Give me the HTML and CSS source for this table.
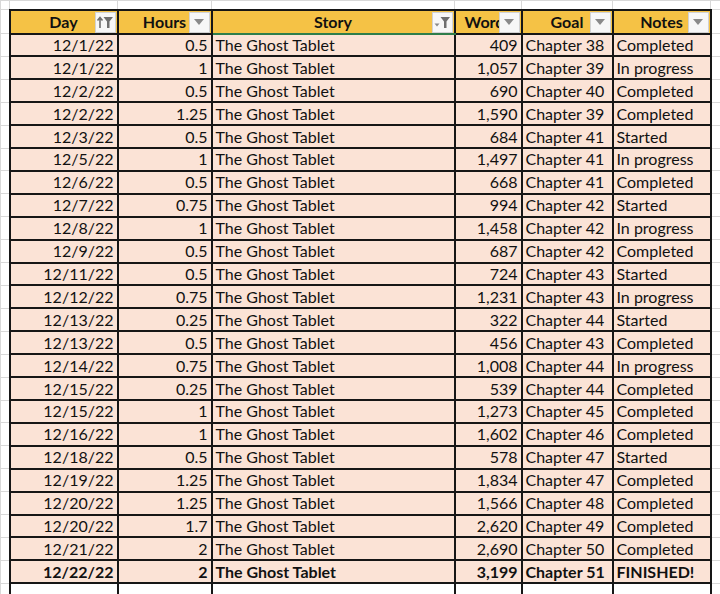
FILE: index.html
```html
<!DOCTYPE html>
<html lang="en">
<head>
<meta charset="utf-8">
<title>Writing log</title>
<link rel="stylesheet" href="styles.css">
</head>
<body>
<table class="sheet">
  <colgroup>
    <col class="c-gut"><col class="c-day"><col class="c-hours"><col class="c-story"><col class="c-words"><col class="c-goal"><col class="c-notes"><col class="c-rest">
  </colgroup>
  <tr class="top"><td class="g"></td><td class="g"></td><td class="g"></td><td class="g"></td><td class="g"></td><td class="g"></td><td class="g"></td><td class="g"></td></tr>
  <tr class="head">
    <td class="g"></td>
    <th>Day<span class="btn"><svg width="18" height="14" viewBox="0 0 18 14"><path d="M4 13V3M1.5 5.5L4 2.5L6.5 5.5" fill="none" stroke="#6f6f6f" stroke-width="1.6"/><path d="M7.5 2H17L13.5 6.5V13H11V6.5Z" fill="#6f6f6f"/></svg></span></th>
    <th>Hours<span class="btn"><svg width="12" height="8" viewBox="0 0 12 8"><path d="M1 1H11L6 7Z" fill="#8a8a8a"/></svg></span></th>
    <th class="story">Story<span class="btn"><svg width="18" height="14" viewBox="0 0 18 14"><path d="M1.5 8.5H6.5L4 11.5Z" fill="#8a8a8a"/><path d="M7.5 2H17L13.5 6.5V13H11V6.5Z" fill="#6f6f6f"/></svg></span></th>
    <th>Words<span class="btn"><svg width="12" height="8" viewBox="0 0 12 8"><path d="M1 1H11L6 7Z" fill="#8a8a8a"/></svg></span></th>
    <th>Goal<span class="btn"><svg width="12" height="8" viewBox="0 0 12 8"><path d="M1 1H11L6 7Z" fill="#8a8a8a"/></svg></span></th>
    <th>Notes<span class="btn"><svg width="12" height="8" viewBox="0 0 12 8"><path d="M1 1H11L6 7Z" fill="#8a8a8a"/></svg></span></th>
    <td class="g"></td>
  </tr>
  <tr><td class="g"></td><td class="r">12/1/22</td><td class="r">0.5</td><td>The Ghost Tablet</td><td class="r">409</td><td>Chapter 38</td><td>Completed</td><td class="g"></td></tr>
  <tr><td class="g"></td><td class="r">12/1/22</td><td class="r">1</td><td>The Ghost Tablet</td><td class="r">1,057</td><td>Chapter 39</td><td>In progress</td><td class="g"></td></tr>
  <tr><td class="g"></td><td class="r">12/2/22</td><td class="r">0.5</td><td>The Ghost Tablet</td><td class="r">690</td><td>Chapter 40</td><td>Completed</td><td class="g"></td></tr>
  <tr><td class="g"></td><td class="r">12/2/22</td><td class="r">1.25</td><td>The Ghost Tablet</td><td class="r">1,590</td><td>Chapter 39</td><td>Completed</td><td class="g"></td></tr>
  <tr><td class="g"></td><td class="r">12/3/22</td><td class="r">0.5</td><td>The Ghost Tablet</td><td class="r">684</td><td>Chapter 41</td><td>Started</td><td class="g"></td></tr>
  <tr><td class="g"></td><td class="r">12/5/22</td><td class="r">1</td><td>The Ghost Tablet</td><td class="r">1,497</td><td>Chapter 41</td><td>In progress</td><td class="g"></td></tr>
  <tr><td class="g"></td><td class="r">12/6/22</td><td class="r">0.5</td><td>The Ghost Tablet</td><td class="r">668</td><td>Chapter 41</td><td>Completed</td><td class="g"></td></tr>
  <tr><td class="g"></td><td class="r">12/7/22</td><td class="r">0.75</td><td>The Ghost Tablet</td><td class="r">994</td><td>Chapter 42</td><td>Started</td><td class="g"></td></tr>
  <tr><td class="g"></td><td class="r">12/8/22</td><td class="r">1</td><td>The Ghost Tablet</td><td class="r">1,458</td><td>Chapter 42</td><td>In progress</td><td class="g"></td></tr>
  <tr><td class="g"></td><td class="r">12/9/22</td><td class="r">0.5</td><td>The Ghost Tablet</td><td class="r">687</td><td>Chapter 42</td><td>Completed</td><td class="g"></td></tr>
  <tr><td class="g"></td><td class="r">12/11/22</td><td class="r">0.5</td><td>The Ghost Tablet</td><td class="r">724</td><td>Chapter 43</td><td>Started</td><td class="g"></td></tr>
  <tr><td class="g"></td><td class="r">12/12/22</td><td class="r">0.75</td><td>The Ghost Tablet</td><td class="r">1,231</td><td>Chapter 43</td><td>In progress</td><td class="g"></td></tr>
  <tr><td class="g"></td><td class="r">12/13/22</td><td class="r">0.25</td><td>The Ghost Tablet</td><td class="r">322</td><td>Chapter 44</td><td>Started</td><td class="g"></td></tr>
  <tr><td class="g"></td><td class="r">12/13/22</td><td class="r">0.5</td><td>The Ghost Tablet</td><td class="r">456</td><td>Chapter 43</td><td>Completed</td><td class="g"></td></tr>
  <tr><td class="g"></td><td class="r">12/14/22</td><td class="r">0.75</td><td>The Ghost Tablet</td><td class="r">1,008</td><td>Chapter 44</td><td>In progress</td><td class="g"></td></tr>
  <tr><td class="g"></td><td class="r">12/15/22</td><td class="r">0.25</td><td>The Ghost Tablet</td><td class="r">539</td><td>Chapter 44</td><td>Completed</td><td class="g"></td></tr>
  <tr><td class="g"></td><td class="r">12/15/22</td><td class="r">1</td><td>The Ghost Tablet</td><td class="r">1,273</td><td>Chapter 45</td><td>Completed</td><td class="g"></td></tr>
  <tr><td class="g"></td><td class="r">12/16/22</td><td class="r">1</td><td>The Ghost Tablet</td><td class="r">1,602</td><td>Chapter 46</td><td>Completed</td><td class="g"></td></tr>
  <tr><td class="g"></td><td class="r">12/18/22</td><td class="r">0.5</td><td>The Ghost Tablet</td><td class="r">578</td><td>Chapter 47</td><td>Started</td><td class="g"></td></tr>
  <tr><td class="g"></td><td class="r">12/19/22</td><td class="r">1.25</td><td>The Ghost Tablet</td><td class="r">1,834</td><td>Chapter 47</td><td>Completed</td><td class="g"></td></tr>
  <tr><td class="g"></td><td class="r">12/20/22</td><td class="r">1.25</td><td>The Ghost Tablet</td><td class="r">1,566</td><td>Chapter 48</td><td>Completed</td><td class="g"></td></tr>
  <tr><td class="g"></td><td class="r">12/20/22</td><td class="r">1.7</td><td>The Ghost Tablet</td><td class="r">2,620</td><td>Chapter 49</td><td>Completed</td><td class="g"></td></tr>
  <tr><td class="g"></td><td class="r">12/21/22</td><td class="r">2</td><td>The Ghost Tablet</td><td class="r">2,690</td><td>Chapter 50</td><td>Completed</td><td class="g"></td></tr>
  <tr class="total"><td class="g"></td><td class="r">12/22/22</td><td class="r">2</td><td>The Ghost Tablet</td><td class="r">3,199</td><td>Chapter 51</td><td>FINISHED!</td><td class="g"></td></tr>
  <tr class="blank"><td class="g"></td><td class="e"></td><td class="e"></td><td class="e"></td><td class="e"></td><td class="e"></td><td class="e"></td><td class="g"></td></tr>
</table>
</body>
</html>
```

FILE: styles.css
```css
html, body {
  margin: 0;
  padding: 0;
  background: #ffffff;
  overflow: hidden;
}

.sheet {
  border-collapse: collapse;
  table-layout: fixed;
  width: 720px;
  font-family: Lato, "Liberation Sans", sans-serif;
  font-size: 16px;
  color: #111111;
}

.c-gut { width: 9px; }
.c-day { width: 108px; }
.c-hours { width: 94px; }
.c-story { width: 243px; }
.c-words { width: 67px; }
.c-goal { width: 91px; }
.c-notes { width: 98px; }
.c-rest { width: 10px; }

.sheet td,
.sheet th {
  border: 2px solid #161616;
  padding: 0 3px;
  line-height: 18px;
  white-space: nowrap;
  overflow: hidden;
  background: #fbe3d6;
  text-align: left;
  color: #111111;
}

.sheet td.r { text-align: right; }

.sheet td.g {
  border: 1px solid #d8d8d8;
  background: #ffffff;
  padding: 0;
}

.sheet tr { height: 22.92px; }
.sheet tr.top { height: 9px; }
.sheet tr.head { height: 24px; }
.sheet tr.blank { height: 14px; }

.sheet th {
  position: relative;
  background: #f5c245;
  font-weight: 700;
  text-align: center;
  padding: 0 2px;
  color: #111111;
}

.sheet th.story {
  border-bottom-color: #2e7d4a;
}

.btn {
  position: absolute;
  top: 1px;
  right: 1px;
  width: 21px;
  height: 21px;
  background: #f7f7f7;
  border: 1px solid #d2d2d2;
  box-sizing: border-box;
  display: flex;
  align-items: center;
  justify-content: center;
}

.total td { font-weight: 700; }

.sheet td.e {
  background: #ffffff;
  border-bottom: 1px solid #d8d8d8;
}
```
